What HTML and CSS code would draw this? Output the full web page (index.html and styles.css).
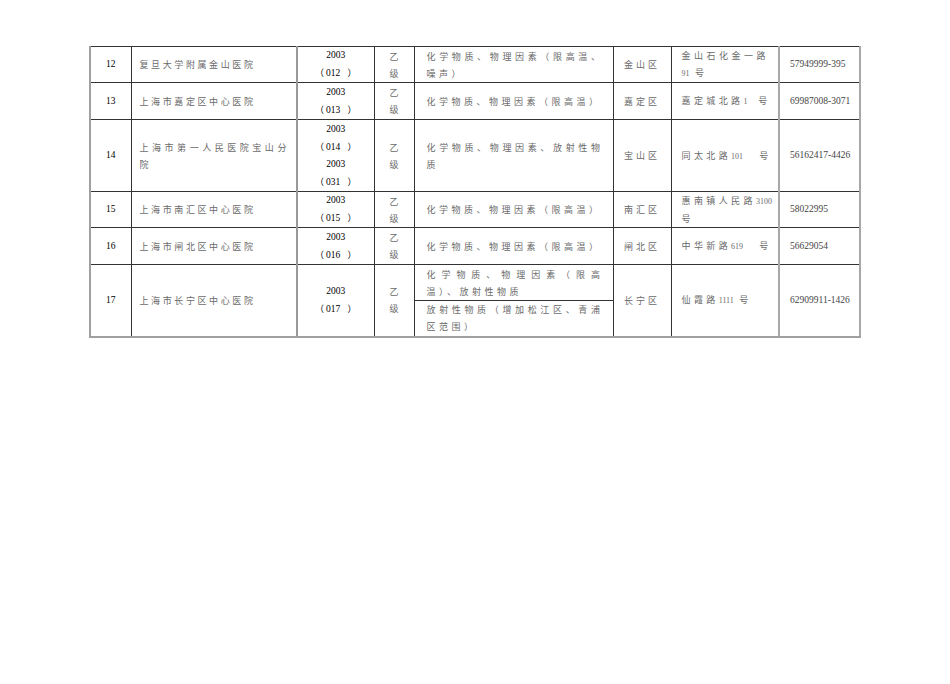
FILE: index.html
```html
<!DOCTYPE html>
<html lang="zh-CN">
<head>
<meta charset="utf-8">
<title>职业病诊断医疗机构</title>
<link rel="stylesheet" href="styles.css">
</head>
<body>
<table class="t">
<colgroup>
<col class="c1"><col class="c2"><col class="c3"><col class="c4"><col class="c5"><col class="c6"><col class="c7"><col class="c8">
</colgroup>
<tr class="h1">
<td class="no">12</td>
<td class="name">复旦大学附属金山医院</td>
<td class="code"><div>2003</div><div><span class="p">（</span>&thinsp;012&nbsp;&nbsp;&nbsp;<span class="p">）</span></div></td>
<td class="lv"><div>乙</div><div>级</div></td>
<td class="fac"><div class="j">化学物质、物理因素（限高温、</div><div>噪声）</div></td>
<td class="dist">金山区</td>
<td class="addr"><div class="j">金山石化金一路</div><div><span class="n">91</span> 号</div></td>
<td class="tel">57949999-395</td>
</tr>
<tr class="h2">
<td class="no">13</td>
<td class="name">上海市嘉定区中心医院</td>
<td class="code"><div>2003</div><div><span class="p">（</span>&thinsp;013&nbsp;&nbsp;&nbsp;<span class="p">）</span></div></td>
<td class="lv"><div>乙</div><div>级</div></td>
<td class="fac">化学物质、物理因素（限高温）</td>
<td class="dist">嘉定区</td>
<td class="addr">嘉定城北路<span class="n">1</span>&nbsp;&nbsp;号</td>
<td class="tel">69987008-3071</td>
</tr>
<tr class="h3">
<td class="no">14</td>
<td class="name"><div class="j">上海市第一人民医院宝山分</div><div>院</div></td>
<td class="code"><div>2003</div><div><span class="p">（</span>&thinsp;014&nbsp;&nbsp;&nbsp;<span class="p">）</span></div><div>2003</div><div><span class="p">（</span>&thinsp;031&nbsp;&nbsp;&nbsp;<span class="p">）</span></div></td>
<td class="lv"><div>乙</div><div>级</div></td>
<td class="fac"><div class="j">化学物质、物理因素、放射性物</div><div>质</div></td>
<td class="dist">宝山区</td>
<td class="addr">同太北路<span class="n">101</span>&nbsp;&nbsp;&nbsp;号</td>
<td class="tel">56162417-4426</td>
</tr>
<tr class="h1">
<td class="no">15</td>
<td class="name">上海市南汇区中心医院</td>
<td class="code"><div>2003</div><div><span class="p">（</span>&thinsp;015&nbsp;&nbsp;&nbsp;<span class="p">）</span></div></td>
<td class="lv"><div>乙</div><div>级</div></td>
<td class="fac">化学物质、物理因素（限高温）</td>
<td class="dist">南汇区</td>
<td class="addr"><div class="j">惠南镇人民路<span class="n">3100</span></div><div>号</div></td>
<td class="tel">58022995</td>
</tr>
<tr class="h2">
<td class="no">16</td>
<td class="name">上海市闸北区中心医院</td>
<td class="code"><div>2003</div><div><span class="p">（</span>&thinsp;016&nbsp;&nbsp;&nbsp;<span class="p">）</span></div></td>
<td class="lv"><div>乙</div><div>级</div></td>
<td class="fac">化学物质、物理因素（限高温）</td>
<td class="dist">闸北区</td>
<td class="addr">中华新路<span class="n">619</span>&nbsp;&nbsp;&nbsp;号</td>
<td class="tel">56629054</td>
</tr>
<tr class="h4">
<td class="no last" rowspan="2">17</td>
<td class="name last" rowspan="2">上海市长宁区中心医院</td>
<td class="code last" rowspan="2"><div>2003</div><div><span class="p">（</span>&thinsp;017&nbsp;&nbsp;&nbsp;<span class="p">）</span></div></td>
<td class="lv last" rowspan="2"><div>乙</div><div>级</div></td>
<td class="fac"><div class="j">化学物质、物理因素（限高</div><div>温）、放射性物质</div></td>
<td class="dist last" rowspan="2">长宁区</td>
<td class="addr last" rowspan="2">仙霞路<span class="n">1111</span>&nbsp;号</td>
<td class="tel last" rowspan="2">62909911-1426</td>
</tr>
<tr class="h4">
<td class="fac last"><div class="j">放射性物质（增加松江区、青浦</div><div>区范围）</div></td>
</tr>
</table>
</body>
</html>
```

FILE: styles.css
```css
body {
  margin: 0;
  background: #ffffff;
}

.t {
  border-collapse: collapse;
  table-layout: fixed;
  width: 770px;
  margin: 46px 0 0 89px;
  font-family: "Noto Sans CJK SC", sans-serif;
  font-size: 9px;
  line-height: 17px;
  color: #6a6a6a;
}

.c1 { width: 41px; }
.c2 { width: 166px; }
.c3 { width: 77px; }
.c4 { width: 40px; }
.c5 { width: 199px; }
.c6 { width: 58px; }
.c7 { width: 108px; }
.c8 { width: 81px; }

.t td {
  border: 1px solid #333333;
  padding: 0;
  vertical-align: middle;
  white-space: nowrap;
}

.h1 { height: 36px; }
.h2 { height: 37px; }
.h3 { height: 72px; }
.h4 { height: 36px; }

.j {
  text-align: justify;
  text-align-last: justify;
}

.no {
  text-align: center;
  font-family: "Liberation Serif", serif;
  font-size: 9.5px;
  color: #000000;
  border-left: 2px solid #a0a0a0 !important;
}

.name {
  padding: 0 7px 0 8px !important;
  letter-spacing: 2.6px;
}

.code {
  text-align: center;
  font-family: "Liberation Serif", serif;
  font-size: 9.5px;
  color: #000000;
  border-left: 2px solid #9a9a9a !important;
}

.p {
  font-family: "Noto Sans CJK SC", sans-serif;
  font-size: 9px;
}

.lv {
  text-align: center;
}

.fac {
  padding: 0 9px 0 12px !important;
  letter-spacing: 3.5px;
}

.dist {
  text-align: center;
  letter-spacing: 3px;
}

.addr {
  padding: 0 9px 0 10px !important;
  letter-spacing: 3.4px;
}

.n {
  font-family: "Liberation Serif", serif;
  font-size: 8px;
  letter-spacing: 0;
}

.tel {
  padding: 0 0 0 10px !important;
  font-family: "Liberation Serif", serif;
  font-size: 9.5px;
  color: #444444;
  border-left: 2px solid #a8a8a8 !important;
  border-right: 2px solid #a8a8a8 !important;
}

.t td.last {
  border-bottom: 2px solid #a0a0a0;
}
```
